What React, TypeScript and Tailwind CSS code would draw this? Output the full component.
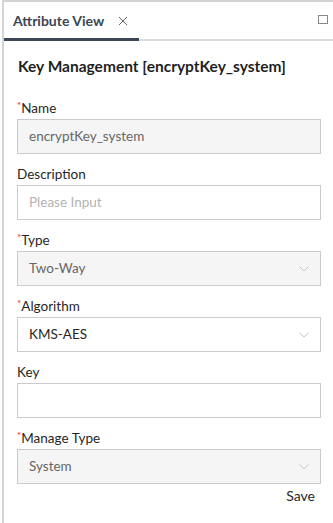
import React from 'react';

const Chevron = () => (
  <svg width="10" height="6" viewBox="0 0 10 6" fill="none" className="shrink-0">
    <path d="M0.5 0.5 L5 5 L9.5 0.5" stroke="#c8c8c8" strokeWidth="1" />
  </svg>
);

const Label = ({ text, required }: { text: string; required?: boolean }) => (
  <div className="h-5 leading-5 text-[13.5px] text-[#262626] flex items-center">
    {required && <span className="text-[#f5222d] text-[10px] self-start leading-[14px]">*</span>}
    {text}
  </div>
);

const App: React.FC = () => {
  const field = 'mt-px h-[35px] w-full border border-[#cbcbcb] flex items-center px-[11px] text-[13.5px]';

  return (
    <div className="h-[523px] w-[333px] bg-white pl-[2px] font-['Source_Sans_Pro',Lato,sans-serif] overflow-hidden">
      <div className="h-full border-l-2 border-t-2 border-[#d4d4d4] flex flex-col">
        {/* Tab bar */}
        <div className="h-[39px] border-b-2 border-[#dcdcdc] flex items-stretch justify-between">
          <div className="-mb-[2px] border-b-[3px] border-[#3b4657] flex items-center pl-[9px] pr-[11px] gap-[14px]">
            <span className="text-[14px] font-bold text-[#3b4657]">Attribute View</span>
            <svg width="10" height="10" viewBox="0 0 10 10" className="mt-px">
              <path d="M1 1 L9 9 M9 1 L1 9" stroke="#666" strokeWidth="1" />
            </svg>
          </div>
          <div className="flex items-center pr-[5px]">
            <div className="h-[9px] w-[10px] border-[1.5px] border-[#888] -mt-[2px]" />
          </div>
        </div>

        {/* Form */}
        <div className="pl-[13px] pr-[12px] flex flex-col">
          <h2 className="mt-[15px] h-5 leading-5 text-[15.5px] font-bold text-[#1f1f1f] pl-px">
            Key Management [encryptKey_system]
          </h2>

          <div className="mt-[22px] flex flex-col gap-[10px]">
            <div>
              <Label text="Name" required />
              <div className={`${field} bg-[#f5f5f5] text-[#666]`}>encryptKey_system</div>
            </div>
            <div>
              <Label text="Description" />
              <div className={`${field} bg-white text-[#b3b3b3]`}>Please Input</div>
            </div>
            <div>
              <Label text="Type" required />
              <div className={`${field} bg-[#f5f5f5] text-[#666] justify-between`}>
                <span>Two-Way</span>
                <Chevron />
              </div>
            </div>
            <div>
              <Label text="Algorithm" required />
              <div className={`${field} bg-white text-[#262626] justify-between`}>
                <span>KMS-AES</span>
                <Chevron />
              </div>
            </div>
            <div>
              <Label text="Key" />
              <div className={`${field} bg-white`} />
            </div>
            <div>
              <Label text="Manage Type" required />
              <div className={`${field} bg-[#f5f5f5] text-[#666] justify-between`}>
                <span>System</span>
                <Chevron />
              </div>
            </div>
          </div>

          <div className="mt-[2px] h-5 leading-5 text-right pr-[6px] text-[14px] text-[#262626]">Save</div>
        </div>
      </div>
    </div>
  );
};

export default App;
